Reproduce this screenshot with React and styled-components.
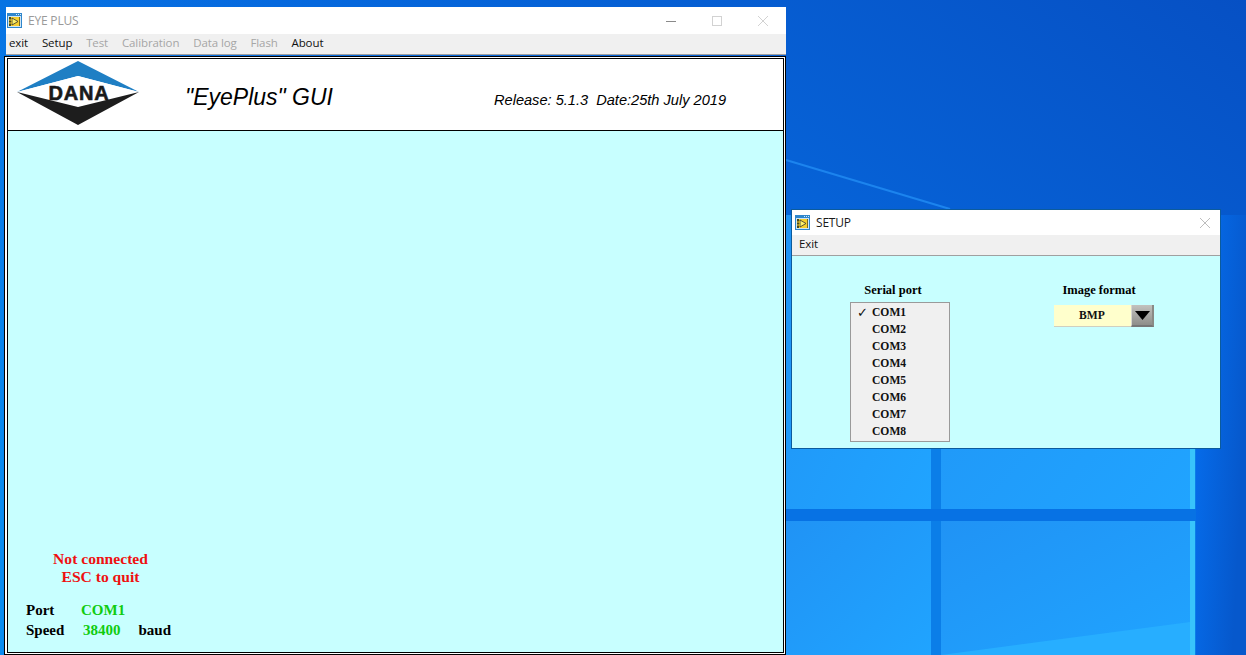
import React from 'react';
import styled, { createGlobalStyle } from 'styled-components';

const GlobalStyle = createGlobalStyle`
  html, body {
    margin: 0;
    padding: 0;
    height: 100%;
    overflow: hidden;
  }
  #root {
    height: 100%;
  }
`;

const Desktop = styled.div`
  position: relative;
  width: 1246px;
  height: 655px;
  overflow: hidden;
  background: #0a6fe0;
`;

const Wallpaper = styled.svg`
  position: absolute;
  inset: 0;
  display: block;
`;

const Window = styled.div`
  position: absolute;
  left: ${p => p.$left}px;
  top: ${p => p.$top}px;
  width: ${p => p.$width}px;
  height: ${p => p.$height}px;
  display: flex;
  flex-direction: column;
  box-sizing: border-box;
  ${p => p.$framed && 'background: #c8ffff; border: 1px solid #0c5b9c;'}
`;

const TitleBar = styled.div`
  flex: none;
  height: ${p => p.$height}px;
  margin-left: ${p => p.$offset || 0}px;
  display: flex;
  align-items: center;
  gap: 6px;
  padding-left: ${p => p.$inset}px;
  background: #fff;
`;

const TitleText = styled.span`
  font: 12px "Open Sans", "Noto Sans", sans-serif;
  letter-spacing: -0.2px;
  color: ${p => (p.$active ? '#1a1a1a' : '#9a9a9a')};
`;

const Controls = styled.div`
  margin-left: auto;
  display: flex;
  align-items: center;
`;

const ControlButton = styled.svg`
  display: block;
  width: ${p => p.$width || 46}px;
  height: 12px;
  stroke: ${p => p.$stroke || '#d2d2d2'};
  stroke-width: 1;
  fill: none;
`;

const MenuBar = styled.div`
  flex: none;
  height: ${p => p.$height}px;
  margin-left: ${p => p.$offset || 0}px;
  display: flex;
  align-items: center;
  gap: ${p => p.$gap}px;
  padding: 0 0 3px ${p => p.$inset}px;
  background: #f0f0f0;
  border-bottom: 1px solid #a0a0a0;
  box-sizing: border-box;
`;

const MenuItem = styled.span`
  font: 11.5px "Open Sans", "Noto Sans", sans-serif;
  letter-spacing: -0.1px;
  color: ${p => (p.$disabled ? '#a6a6a6' : '#111')};
`;

const Frame = styled.div`
  flex: 1;
  min-height: 0;
  display: flex;
  flex-direction: column;
  margin-top: 1px;
  background: #fff;
  border-style: double;
  border-color: #000;
  border-width: 3px 3px 3px 4px;
  box-sizing: border-box;
`;

const Banner = styled.div`
  flex: none;
  height: 72px;
  display: flex;
  align-items: center;
  padding: 0 0 4px 9px;
  background: #fff;
  border-bottom: 1px solid #000;
  box-sizing: border-box;
`;

const LogoWrap = styled.div`
  position: relative;
  flex: none;
  width: 124px;
  height: 66px;
`;

const LogoWord = styled.span`
  position: absolute;
  left: 0;
  right: 0;
  top: 23px;
  text-align: center;
  font: 900 20px/20px "Liberation Sans", Arial, sans-serif;
  letter-spacing: 0.8px;
  color: #1a1a1a;
  -webkit-text-stroke: 0.6px #1a1a1a;
`;

const AppTitle = styled.div`
  margin-left: 44px;
  padding-top: 10px;
  font: italic 23px "Liberation Sans", Arial, sans-serif;
  color: #000;
`;

const Release = styled.div`
  margin-left: 161px;
  padding-top: 15px;
  white-space: pre;
  font: italic 14.6px "Liberation Sans", Arial, sans-serif;
  color: #000;
`;

const Canvas = styled.div`
  flex: 1;
  display: flex;
  flex-direction: column;
  justify-content: flex-end;
  padding: 0 0 13px 18px;
  background: #c8ffff;
`;

const Notice = styled.div`
  width: 149px;
  text-align: center;
  font: bold 15.6px/18px "Liberation Serif", "Times New Roman", serif;
  color: #ee1111;
`;

const StatusList = styled.div`
  display: flex;
  flex-direction: column;
  gap: 3px;
  margin-top: 16px;
`;

const StatusRow = styled.div`
  display: flex;
  font: bold 15px/17px "Liberation Serif", "Times New Roman", serif;
  color: #000;
`;

const StatusLabel = styled.span`
  width: ${p => p.$width}px;
`;

const StatusValue = styled.span`
  color: #10cc10;
  margin-right: 18px;
`;

const Panel = styled.div`
  flex: 1;
  display: flex;
  gap: 104px;
  padding: 28px 0 0 58px;
`;

const Field = styled.div`
  width: 100px;
  display: flex;
  flex-direction: column;
`;

const FieldLabel = styled.div`
  margin-right: ${p => p.$shift}px;
  white-space: nowrap;
  text-align: center;
  font: bold 12.5px/13px "Liberation Serif", "Times New Roman", serif;
  color: #000;
`;

const ListBox = styled.div`
  margin-top: 5px;
  height: 140px;
  padding: 1px 0 0 6px;
  display: flex;
  flex-direction: column;
  background: #f0f0f0;
  border: 1px solid #9a9a9a;
  box-sizing: border-box;
`;

const ListItem = styled.div`
  height: 17px;
  display: flex;
  align-items: center;
  font: bold 11.6px "Liberation Serif", "Times New Roman", serif;
  color: #111;
`;

const CheckSlot = styled.span`
  flex: none;
  width: 15px;
  font: 13px "DejaVu Sans", sans-serif;
`;

const Dropdown = styled.div`
  margin-top: 8px;
  height: 22px;
  display: flex;
`;

const DropdownValue = styled.div`
  flex: 1;
  display: flex;
  align-items: center;
  justify-content: center;
  padding-right: 1px;
  background: #ffffcc;
  border-bottom: 1px solid #d0d0c0;
  box-sizing: border-box;
  font: bold 11.6px "Liberation Serif", "Times New Roman", serif;
  color: #111;
`;

const DropdownArrow = styled.div`
  flex: none;
  width: 23px;
  display: flex;
  align-items: center;
  justify-content: center;
  background: linear-gradient(#c2c2be, #8e8e8a);
  box-sizing: border-box;
  border-left: 1px solid #d8d8d0;
  border-bottom: 2px solid #777;
  border-right: 2px solid #8a8a86;
`;

const Arrow = styled.svg`
  display: block;
  width: 15px;
  height: 9px;
  fill: #000;
`;

const AppIcon = () => (
  <svg width="15" height="15" viewBox="0 0 15 15">
    <rect x="0" y="0" width="15" height="15" fill="#2f86cc" />
    <path d="M9 1.5h1M11 1.5h1M13 1.5h1" stroke="#d6ecfa" strokeWidth="1" />
    <rect x="1" y="3" width="13" height="11" fill="#cfe6f6" />
    <rect x="2" y="4" width="11" height="9" fill="#f6cf2e" />
    <rect x="2" y="4" width="2" height="9" fill="#4a4a1c" />
    <path d="M5 5l6 3.5-6 3.5z" fill="#fff26a" stroke="#333" strokeWidth="0.8" />
    <path d="M2 7h3M2 10h3" stroke="#f6cf2e" strokeWidth="1" />
    <rect x="12" y="4" width="1" height="9" fill="#7a6a20" />
  </svg>
);

const DanaLogo = () => (
  <svg width="124" height="66" viewBox="0 0 124 66">
    <path d="M61 1 L122 32 L61 16 L0 32 Z" fill="#1f7fc4" />
    <path d="M0 32 L61 16 L122 32 L61 47 Z" fill="#fff" />
    <path d="M0 32 L61 47 L122 32 L61 65 Z" fill="#1d1d1d" />
  </svg>
);

function App() {
  const menu = [
    { label: 'exit' },
    { label: 'Setup' },
    { label: 'Test', disabled: true },
    { label: 'Calibration', disabled: true },
    { label: 'Data log', disabled: true },
    { label: 'Flash', disabled: true },
    { label: 'About' },
  ];
  const ports = ['COM1', 'COM2', 'COM3', 'COM4', 'COM5', 'COM6', 'COM7', 'COM8'];

  return (
    <>
      <GlobalStyle />
      <Desktop>
        <Wallpaper width="1246" height="655" viewBox="0 0 1246 655">
          <defs>
            <linearGradient id="sky" x1="1" y1="0" x2="0" y2="0.75">
              <stop offset="0" stopColor="#0650c4" />
              <stop offset="0.5" stopColor="#0669de" />
              <stop offset="1" stopColor="#0a8cf0" />
            </linearGradient>
            <linearGradient id="edge" x1="0" y1="0" x2="1" y2="0.4">
              <stop offset="0" stopColor="#0572f4" />
              <stop offset="1" stopColor="#0658cc" />
            </linearGradient>
            <linearGradient id="pane" x1="0" y1="0" x2="1" y2="1">
              <stop offset="0" stopColor="#2093f5" />
              <stop offset="1" stopColor="#20a4ff" />
            </linearGradient>
          </defs>
          <rect width="1246" height="655" fill="url(#sky)" />
          <rect x="1190" y="215" width="56" height="440" fill="url(#edge)" />
          <path d="M786 160 L950 209" stroke="#1c84ee" strokeWidth="2" fill="none" />
          <rect x="786" y="215" width="410" height="440" fill="#0b7ee8" />
          <rect x="786" y="215" width="145" height="294" fill="url(#pane)" />
          <rect x="941" y="215" width="250" height="294" fill="url(#pane)" />
          <rect x="786" y="521" width="145" height="134" fill="url(#pane)" />
          <rect x="941" y="521" width="250" height="134" fill="url(#pane)" />
          <rect x="786" y="509" width="410" height="12" fill="#0772e4" />
          <path d="M941 655 L1190 622 L1190 655 Z" fill="#27aeff" />
          <rect x="1190" y="215" width="5" height="294" fill="#38c4fb" />
          <rect x="1190" y="521" width="5" height="134" fill="#38c4fb" />
        </Wallpaper>

        <Window $left={4} $top={7} $width={782} $height={648}>
          <TitleBar $height={27} $offset={2} $inset={1}>
            <AppIcon />
            <TitleText>EYE PLUS</TitleText>
            <Controls>
              <ControlButton viewBox="0 0 46 12">
                <path d="M18 6.5h10" stroke="#8a8a8a" />
              </ControlButton>
              <ControlButton viewBox="0 0 46 12">
                <rect x="18.5" y="1.5" width="9" height="9" />
              </ControlButton>
              <ControlButton viewBox="0 0 46 12">
                <path d="M18 1l10 10M28 1L18 11" />
              </ControlButton>
            </Controls>
          </TitleBar>
          <MenuBar $height={21} $gap={13.8} $offset={2} $inset={3}>
            {menu.map(item => (
              <MenuItem key={item.label} $disabled={item.disabled}>{item.label}</MenuItem>
            ))}
          </MenuBar>
          <Frame>
            <Banner>
              <LogoWrap>
                <DanaLogo />
                <LogoWord>DANA</LogoWord>
              </LogoWrap>
              <AppTitle>"EyePlus" GUI</AppTitle>
              <Release>Release: 5.1.3  Date:25th July 2019</Release>
            </Banner>
            <Canvas>
              <Notice>
                Not connected
                <br />
                ESC to quit
              </Notice>
              <StatusList>
                <StatusRow>
                  <StatusLabel $width={55}>Port</StatusLabel>
                  <StatusValue>COM1</StatusValue>
                </StatusRow>
                <StatusRow>
                  <StatusLabel $width={57}>Speed</StatusLabel>
                  <StatusValue>38400</StatusValue>
                  baud
                </StatusRow>
              </StatusList>
            </Canvas>
          </Frame>
        </Window>

        <Window $framed $left={791} $top={209} $width={430} $height={240}>
          <TitleBar $height={25} $inset={3}>
            <AppIcon />
            <TitleText $active>SETUP</TitleText>
            <Controls>
              <ControlButton $width={30} $stroke="#bdbdbd" viewBox="0 0 30 12">
                <path d="M10 1l10 10M20 1L10 11" />
              </ControlButton>
            </Controls>
          </TitleBar>
          <MenuBar $height={21} $gap={0} $inset={7}>
            <MenuItem>Exit</MenuItem>
          </MenuBar>
          <Panel>
            <Field>
              <FieldLabel $shift={14}>Serial port</FieldLabel>
              <ListBox>
                {ports.map((port, i) => (
                  <ListItem key={port}>
                    <CheckSlot>{i === 0 ? '✓' : ''}</CheckSlot>
                    {port}
                  </ListItem>
                ))}
              </ListBox>
            </Field>
            <Field>
              <FieldLabel $shift={10}>Image format</FieldLabel>
              <Dropdown>
                <DropdownValue>BMP</DropdownValue>
                <DropdownArrow>
                  <Arrow viewBox="0 0 15 9">
                    <path d="M0 0h15L7.5 9z" />
                  </Arrow>
                </DropdownArrow>
              </Dropdown>
            </Field>
          </Panel>
        </Window>
      </Desktop>
    </>
  );
}

export default App;
